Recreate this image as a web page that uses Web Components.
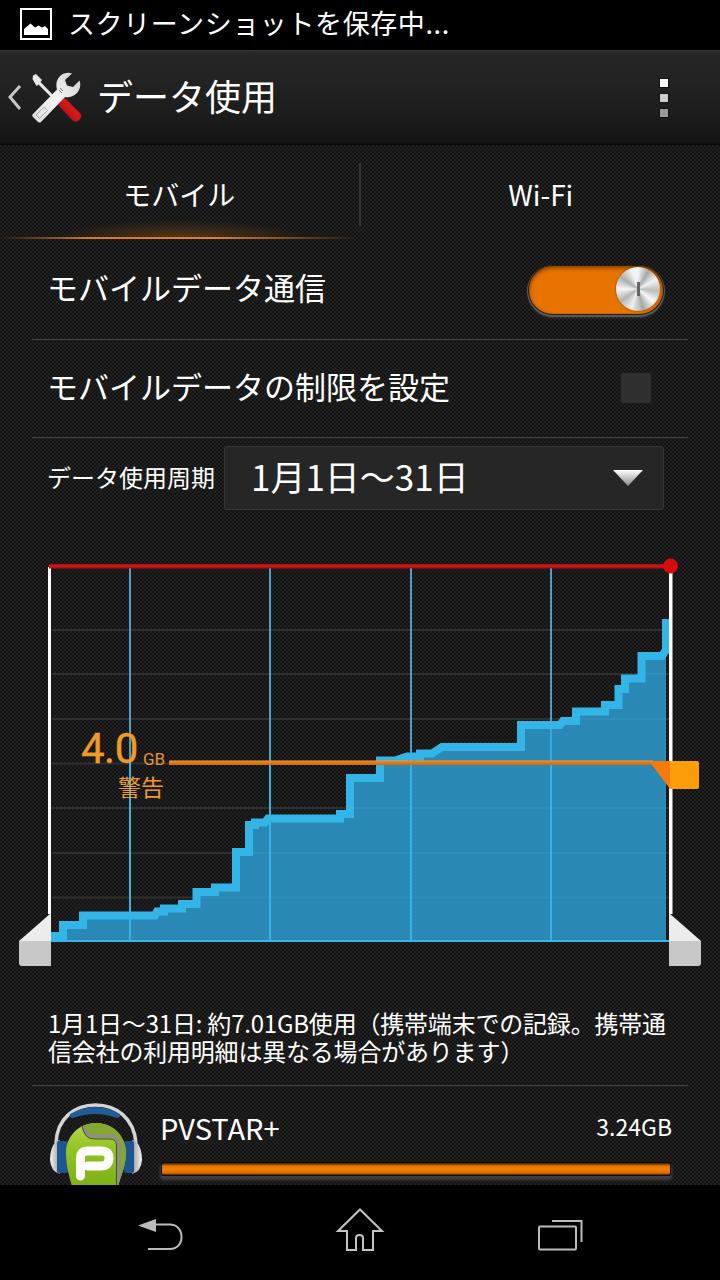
<!DOCTYPE html>
<html lang="ja">
<head>
<meta charset="utf-8">
<title>データ使用</title>
<style>
html,body{margin:0;padding:0;background:#000;}
body{width:720px;height:1280px;overflow:hidden;display:flex;flex-direction:column;font-family:"Noto Sans CJK JP","Noto Sans",sans-serif;color:#fff;}
app-content{flex:1 1 auto;min-height:0;}
</style>
</head>
<body>
<status-bar>スクリーンショットを保存中...</status-bar>
<action-bar>データ使用</action-bar>
<app-content>
  <tab-strip><span slot="active">モバイル</span><span slot="other">Wi-Fi</span></tab-strip>
  <setting-row style="height:99px">モバイルデータ通信<toggle-switch slot="control"></toggle-switch></setting-row>
  <setting-row style="height:97px">モバイルデータの制限を設定<check-box slot="control"></check-box></setting-row>
  <cycle-row><span slot="label">データ使用周期</span>1月1日～31日</cycle-row>
  <usage-chart></usage-chart>
  <usage-note>1月1日～31日: 約7.01GB使用（携帯端末での記録。携帯通信会社の利用明細は異なる場合があります）</usage-note>
  <app-usage name="PVSTAR+" amount="3.24GB"></app-usage>
</app-content>
<nav-bar></nav-bar>

<script>
const FONT = '"Noto Sans CJK JP","Noto Sans",sans-serif';
const TEXTURE = 'background-color:#1a1a1a;background-image:conic-gradient(#131313 25%,#212121 0 50%,#131313 0 75%,#212121 0);background-size:4px 4px;';

function define(name, html, setup) {
  customElements.define(name, class extends HTMLElement {
    constructor() {
      super();
      this.attachShadow({mode: 'open'}).innerHTML = typeof html === 'function' ? html(this) : html;
    }
    connectedCallback() {
      if (setup) setup(this);
    }
  });
}

define('status-bar', `
<style>
:host{display:flex;flex:none;align-items:center;height:50px;background:#000;box-sizing:border-box;padding:0 0 6px 20px;gap:16px;font:400 27px/1 ${FONT};letter-spacing:.6px;color:#fff;}
svg{display:block;flex:none;margin-top:4px;}
</style>
<svg width="32" height="32" viewBox="0 0 32 32"><rect x="1" y="1" width="30" height="30" fill="none" stroke="#fff" stroke-width="2"/><path d="M4 27V21L10.500 15.500 15 19.500 18.500 17.500 22 19.500 25 18 28 21V27Z" fill="#fff"/></svg>
<span><slot></slot></span>`);

define('action-bar', `
<style>
:host{display:flex;flex:none;align-items:center;height:95px;box-sizing:border-box;position:relative;background:linear-gradient(#333 0,#262626 3px,#232323 30%,#1c1c1c 70%,#141414 97%,#0b0b0b 100%);font:400 36px/1 ${FONT};color:#fff;}
svg.logo{display:block;flex:none;width:90px;height:95px;}
.title{margin-left:7px;padding-bottom:6px;}
.more{position:absolute;right:52px;top:29px;display:flex;flex-direction:column;gap:7px;}
.more i{display:block;width:8px;height:8px;box-shadow:0 0 0 1px rgba(0,0,0,.4);}
</style>
<svg class="logo" viewBox="0 50 90 95">
 <defs>
  <linearGradient id="w" x1="0" y1="1" x2="1" y2="0"><stop offset="0" stop-color="#dcdcdc"/><stop offset=".5" stop-color="#f4f4f4"/><stop offset="1" stop-color="#cfcfcf"/></linearGradient>
  <linearGradient id="r" x1="0" y1="1" x2="1" y2="0"><stop offset="0" stop-color="#7e0a0a"/><stop offset=".55" stop-color="#d81818"/><stop offset="1" stop-color="#a01010"/></linearGradient>
 </defs>
 <path d="M20 86 10 97 20 109" fill="none" stroke="#c6c6c6" stroke-width="3"/>
 <path d="M33 75.500 36 74 42 80 40.500 82 54 96 52 98 38.500 84.500 36.500 86 32.500 79Z" fill="#e8e8e8"/>
 <path d="M61 99Q63 96 66 99L80 113Q82.500 116 80 119L78 121Q75 123 72 120L59 106Q57 103 59 101Z" fill="url(#r)"/>
 <path d="M32.500 114.500 57 89.500C55 82 58 76 64 73.500 67 72.500 70 72.500 72 73.500L65 80 67 85.500 73 87 79.500 80.500C81 84 80.500 89 77 93 73 97 68 98 65 97L41 122Q39.500 123 38 122L33 117Q31.500 115.500 32.500 114.500Z" fill="url(#w)"/>
 <path d="M36 115 44 107 47.500 110.500 39.500 118.500Z" fill="none" stroke="#aaa" stroke-width="1"/>
 <path d="M60 88 63 91M59 90 62 93" stroke="#777" stroke-width="1"/>
</svg>
<span class="title"><slot></slot></span>
<div class="more"><i style="background:#fff"></i><i style="background:#ccc"></i><i style="background:#999"></i></div>`);

define('app-content', `
<style>
:host{display:block;overflow:hidden;${TEXTURE}}
</style><slot></slot>`);

define('tab-strip', `
<style>
:host{display:flex;height:95px;position:relative;font:400 28px/1 ${FONT};color:#fff;}
.tab{flex:1 1 0;display:flex;align-items:center;justify-content:center;padding-top:2px;box-sizing:border-box;}
.tab.first{padding-right:3px;}
.tab.on::before{content:"";position:absolute;left:0;width:360px;bottom:2px;height:18px;background:radial-gradient(ellipse 125px 18px at 50% 100%,rgba(224,120,20,.3),rgba(224,120,20,0));}
.tab.on::after{content:"";position:absolute;left:0;width:358px;bottom:1px;height:2px;background:linear-gradient(90deg,rgba(226,122,24,0),#d9781c 25%,#e0801e 60%,rgba(226,122,24,0));}
.sep{position:absolute;left:359px;top:18px;height:63px;width:2px;background:#363636;}
</style>
<div class="tab on first"><slot name="active"></slot></div><div class="sep"></div><div class="tab"><slot name="other"></slot></div>`);

define('setting-row', `
<style>
:host{display:flex;align-items:center;justify-content:space-between;box-sizing:content-box;margin:0 32px;padding-left:15px;border-bottom:1px solid #474747;font:400 31px/1 ${FONT};color:#fff;}
.t{margin-top:-6px;}
.c{display:flex;}
</style>
<span class="t"><slot></slot></span><div class="c"><slot name="control"></slot></div>`);

define('toggle-switch', `
<style>
:host{display:block;width:134px;height:48px;box-sizing:border-box;margin-right:25px;margin-top:1px;border-radius:24px;background:#e87400;box-shadow:0 0 0 1px #2a1a08,0 1px 0 2px #5a5a5a,0 3px 3px 1px rgba(120,120,120,.3),inset 0 2px 4px rgba(60,25,0,.6);position:relative;}
.k{position:absolute;right:3px;top:1px;width:44px;height:44px;border-radius:50%;background:conic-gradient(#f4f4f4 0deg,#a9a9a9 30deg,#f2f2f2 62deg,#bcbcbc 95deg,#f8f8f8 130deg,#a8a8a8 165deg,#efefef 200deg,#b4b4b4 235deg,#f6f6f6 270deg,#aeaeae 305deg,#f0f0f0 340deg,#f4f4f4 360deg);box-shadow:0 0 2px rgba(0,0,0,.6);display:flex;align-items:center;justify-content:center;}
.k i{display:block;width:3px;height:14px;background:#666;}
</style>
<div class="k"><i></i></div>`);

define('check-box', `
<style>
:host{display:block;width:30px;height:30px;margin-right:37px;margin-top:-1px;background:#2f2f2f;border-radius:2px;box-shadow:0 0 0 1px #1c1c1c;}
</style>`);

define('cycle-row', `
<style>
:host{display:flex;align-items:flex-start;box-sizing:border-box;height:102px;padding:8px 56px 0 47px;font:400 24px/1 ${FONT};color:#fff;}
.l{flex:none;width:177px;height:62px;display:flex;align-items:center;}
.sp{flex:1 1 auto;height:64px;box-sizing:border-box;display:flex;align-items:center;justify-content:space-between;padding:0 20px 0 26px;background:#262626;border:1px solid #363636;border-radius:3px;font-size:35px;}
.v{margin-top:-6px;}
svg{display:block;}
</style>
<div class="l"><slot name="label"></slot></div>
<div class="sp"><span class="v"><slot></slot></span>
<svg width="30" height="16" viewBox="0 0 30 16"><defs><linearGradient id="a" x1="0" y1="0" x2="0" y2="1"><stop offset="0" stop-color="#fff"/><stop offset="1" stop-color="#8a8a8a"/></linearGradient></defs><path d="M0 0H30L15 16Z" fill="url(#a)"/></svg></div>`);

const GRID_Y = [630,674,719,763.5,808,853,897.500];
const GRID_X = [130,270,411,551];
const CURVE = 'M51 936H63V925H83V915.5H155L157 911.500H164V908.500H182V904H196.500V892H215V887.500H236V852H249V825H255V822.500H265L268 818.500H340V814H350V778H380V760.500H395L407 756.500H420V753.500H432L442 747H521V725H560L563 721H576V711.500H605V705H618.500V689H625V678.500H641.500V656H662L666 650V619';

define('usage-chart', `
<style>
:host{display:block;position:relative;width:720px;height:440px;}
svg{display:block;position:absolute;inset:0;}
.big{position:absolute;left:81px;top:183px;font:400 42px/52px Roboto,sans-serif;letter-spacing:-.5px;color:#f09a28;-webkit-text-stroke:.4px #f09a28;}
.gb{position:absolute;left:143px;top:208px;font:400 17px/22px Roboto,sans-serif;color:#e8952c;}
.warn{position:absolute;left:118px;top:231px;font:400 23px/30px ${FONT};color:#ee9a2c;}
</style>
<svg width="720" height="440" viewBox="0 540 720 440">
 <defs>
  <clipPath id="cp"><rect x="51" y="560" width="618" height="382"/></clipPath>
  <linearGradient id="or" x1="0" y1="0" x2="0" y2="1"><stop offset="0" stop-color="#f2a040"/><stop offset=".3" stop-color="#ee7e16"/><stop offset="1" stop-color="#c86a14"/></linearGradient>
 </defs>
 ${GRID_Y.map(y => `<rect x="52" y="${y-1}" width="617" height="2" fill="#303030"/>`).join('')}
 ${GRID_X.map(x => `<rect x="${x-1}" y="568" width="2" height="373" fill="#4aa0c6"/>`).join('')}
 <path d="${CURVE}V941H51Z" fill="rgba(49,172,230,.76)" clip-path="url(#cp)"/>
 ${GRID_X.map(x => `<rect x="${x-1}" y="760" width="2" height="181" fill="#38b2e4" opacity=".9"/>`).join('')}
 <path d="${CURVE}" fill="none" stroke="#33b5e8" stroke-width="8" stroke-linejoin="miter" clip-path="url(#cp)"/>
 <rect x="51" y="940" width="618" height="2" fill="#35b5e8"/>
 <rect x="48" y="567" width="3" height="347" fill="#fff"/>
 <rect x="669" y="573" width="3.500" height="341" fill="#fff"/>
 <path d="M19 941 51 913V941Z" fill="#ececec"/>
 <path d="M19 941H51V966H22Q19 966 19 963Z" fill="#c8c8c8"/>
 <path d="M701 941 669 913V941Z" fill="#ececec"/>
 <path d="M669 941H701V963Q701 966 698 966H669Z" fill="#c8c8c8"/>
 <rect x="49" y="564" width="622" height="4.500" fill="#ae1010"/>
 <rect x="49" y="565" width="622" height="2" fill="#cc1616"/>
 <circle cx="670.500" cy="566" r="7.500" fill="#d40c0c"/>
 <rect x="169" y="760.500" width="484" height="4.500" fill="url(#or)"/>
 <path d="M652 765 670 789V761H652Z" fill="#f57a08"/>
 <path d="M670 761H697Q699 761 699 763V787Q699 789 697 789H670Z" fill="#fd9d09"/>
</svg>
<span class="big">4.0</span><span class="gb">GB</span><span class="warn">警告</span>`);

define('usage-note', `
<style>
:host{display:block;box-sizing:border-box;height:105px;padding:29px 50px 0 48px;font:400 24px/28px ${FONT};color:#fff;letter-spacing:-.2px;}
</style><slot></slot>`);

define('app-usage', h => `
<style>
:host{display:block;margin:0 32px;border-top:1px solid #474747;height:120px;position:relative;font:400 29px/1 ${FONT};color:#fff;}
.row{display:flex;height:100%;box-sizing:border-box;padding:16px 16px 0 17px;gap:18px;}
svg{display:block;flex:none;width:93px;height:84px;overflow:visible;}
.main{flex:1 1 auto;display:flex;flex-direction:column;}
.top{display:flex;justify-content:space-between;align-items:center;height:56px;box-sizing:border-box;}
.amt{font-size:23px;margin-top:-8px;}
.name{margin-top:-5px;}
.bar{height:12px;margin:5px 2px 0 2px;box-sizing:border-box;border-radius:2px;background:linear-gradient(#3a1c00,#e87400 25%,#f08000 55%,#d56a00 85%,#3a1c00);box-shadow:0 0 0 1px #120a02,0 3px 3px 2px rgba(120,120,120,.4);}
</style>
<div class="row">
<svg viewBox="49 1102 93 84">
 <defs>
  <linearGradient id="g" x1="0" y1="0" x2="0" y2="1"><stop offset="0" stop-color="#b6d64e"/><stop offset=".45" stop-color="#8fc31f"/><stop offset="1" stop-color="#7fb01a"/></linearGradient>
  <linearGradient id="e" x1="0" y1="0" x2="1" y2="0"><stop offset="0" stop-color="#f4f4f4"/><stop offset="1" stop-color="#9a9a9a"/></linearGradient>
  <linearGradient id="e2" x1="1" y1="0" x2="0" y2="0"><stop offset="0" stop-color="#f4f4f4"/><stop offset="1" stop-color="#9a9a9a"/></linearGradient>
  <clipPath id="ball"><path d="M96 1123C114 1123 126 1137 126 1153 126 1165 121 1176 118 1186H72C69 1176 66 1165 66 1153 66 1137 78 1123 96 1123Z"/></clipPath>
 </defs>
 <path d="M56 1143C57 1118 75 1105 95.500 1105S134 1118 136 1143" fill="none" stroke="#d4d4d4" stroke-width="3.500"/>
 <path d="M70 1114Q95 1100 120 1114 121 1118 117 1118 95 1110 73 1118 69 1118 70 1114Z" fill="#1f5d97"/>
 <path d="M56 1141 60 1140V1174Q51 1172 50 1160 50 1148 56 1141Z" fill="url(#e)"/>
 <path d="M136 1141 132 1140V1174Q141 1172 142 1160 142 1148 136 1141Z" fill="url(#e2)"/>
 <rect x="57" y="1141" width="11" height="32" rx="2" fill="#1d5590"/>
 <rect x="124" y="1141" width="10" height="32" rx="2" fill="#1d5590"/>
 <path d="M96 1123C114 1123 126 1137 126 1153 126 1165 121 1176 118 1186H72C69 1176 66 1165 66 1153 66 1137 78 1123 96 1123Z" fill="url(#g)"/>
 <g clip-path="url(#ball)">
  <path d="M82 1120V1127Q84 1137 94 1137H111Q118 1137 118 1146V1186H130V1120Z" fill="#84a830"/>
  <path d="M83 1124Q85 1136.500 94 1136.500H111Q118.500 1136.500 118.500 1146V1186" fill="none" stroke="#8f8f86" stroke-width="4"/>
  <path d="M82 1125Q84 1139 94 1139H110Q116.500 1139 116.500 1146V1186" fill="none" stroke="#3f5a14" stroke-width="1"/>
 </g>
 <path d="M80.500 1176V1158Q80.500 1151 87.500 1151H101Q109 1151 109 1158 109 1166 101 1166H88" fill="none" stroke="#fff" stroke-width="9" stroke-linecap="round"/>
</svg>
<div class="main">
 <div class="top"><span class="name">${h.getAttribute('name')||''}</span><span class="amt">${h.getAttribute('amount')||''}</span></div>
 <div class="bar"></div>
</div>
</div>`);

define('nav-bar', `
<style>
:host{display:flex;flex:none;height:95px;background:#000;justify-content:center;align-items:center;gap:140px;position:relative;}
svg{display:block;width:60px;height:60px;}
</style>
<svg viewBox="130 1205 60 60"><path d="M138 1227.500 156 1221V1234Z" fill="#bcbcbc"/><path d="M155 1226.500H170C177 1226.500 181.500 1232 181.500 1239S177 1251 170 1251H148" fill="none" stroke="#bcbcbc" stroke-width="2"/></svg>
<svg viewBox="330 1205 60 60"><path d="M360 1211.500 382 1233H373V1252H363V1240Q363 1237 359.500 1237 356 1237 356 1240V1252H347V1233H338Z" fill="none" stroke="#c4c4c4" stroke-width="2"/></svg>
<svg viewBox="530 1205 60 60"><rect x="539" y="1228.500" width="37" height="23" rx="1" fill="none" stroke="#bcbcbc" stroke-width="2"/><path d="M552 1223H581.500V1244" fill="none" stroke="#bcbcbc" stroke-width="2"/></svg>`);
</script>
</body>
</html>
